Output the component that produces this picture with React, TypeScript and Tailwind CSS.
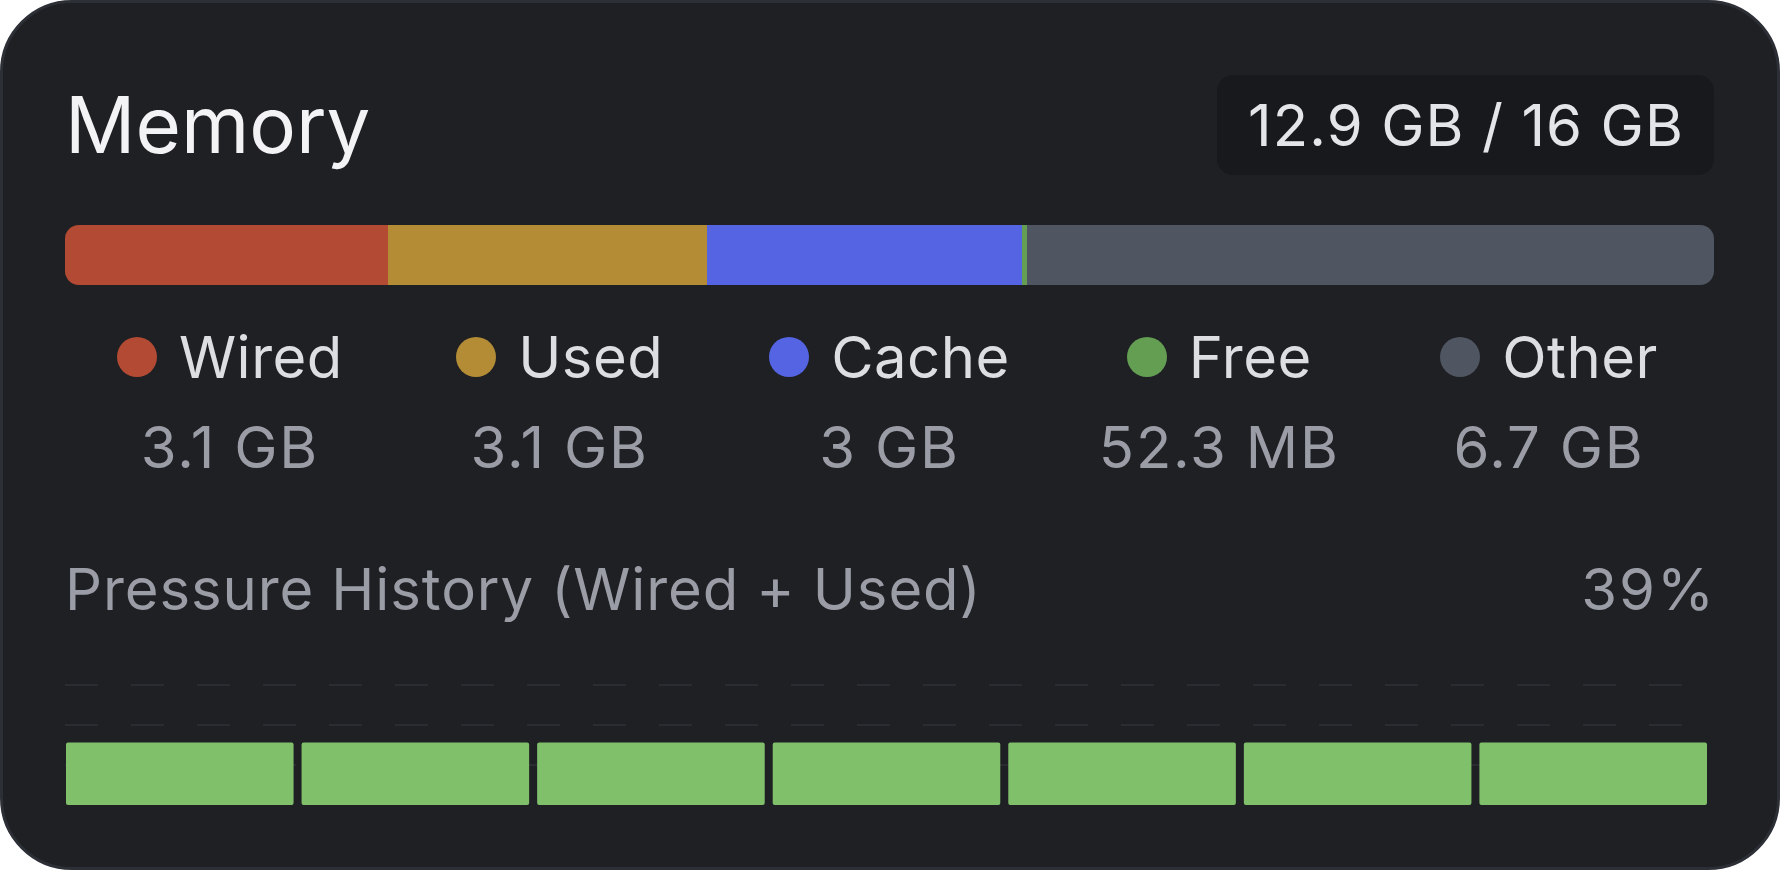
const segments = [
  { label: 'Wired', value: '3.1 GB', pct: 19.59, color: 'bg-[#b34a33]' },
  { label: 'Used', value: '3.1 GB', pct: 19.35, color: 'bg-[#b38c35]' },
  { label: 'Cache', value: '3 GB', pct: 19.1, color: 'bg-[#5464e3]' },
  { label: 'Free', value: '52.3 MB', pct: 0.3, color: 'bg-[#639e53]' },
  { label: 'Other', value: '6.7 GB', pct: 41.66, color: 'bg-[#4f5561]' },
]

// pressure history samples (percent)
const history = [39, 39, 39, 39, 39, 39, 39]

function PressureChart() {
  const width = 1649
  const height = 160
  const chartWidth = 1641
  const gap = 8
  const barWidth = (chartWidth - gap * (history.length - 1)) / history.length

  return (
    <svg width={width} height={height} className="block">
      {[0.25, 0.5, 0.75].map((f) => (
        <line
          key={f}
          x1={0}
          x2={width}
          y1={height * f}
          y2={height * f}
          stroke="#2a2c31"
          strokeWidth={2}
          strokeDasharray="33 33"
        />
      ))}
      {history.map((p, i) => {
        const h = (height * p) / 100
        return (
          <rect
            key={i}
            x={1 + i * (barWidth + gap)}
            y={height - h}
            width={barWidth}
            height={h}
            rx={2}
            fill="#80c06b"
          />
        )
      })}
    </svg>
  )
}

export default function App() {
  return (
    <div className="w-[1780px] h-[870px] bg-white" style={{ fontFamily: 'Inter, "Noto Sans", sans-serif' }}>
      <div className="h-full rounded-[72px] border-[3px] border-[#2c2f36] bg-[#1f2024] pl-[62px] pr-[63px] pt-[72px]">
        {/* Header */}
        <div className="flex h-[100px] items-center justify-between">
          <div className="text-[78px] leading-none text-[#f3f3f5]">Memory</div>
          <div className="flex h-[100px] items-center rounded-[16px] bg-[#18191c] pl-[31px] pr-[30px] text-[58px] leading-none tracking-[1.1px] text-[#e4e5e9]">
            12.9 GB / 16 GB
          </div>
        </div>

        {/* Usage bar */}
        <div className="mt-[50px] flex h-[60px] overflow-hidden rounded-[14px]">
          {segments.map((s) => (
            <div key={s.label} className={s.color} style={{ width: `${s.pct}%` }} />
          ))}
        </div>

        {/* Legend */}
        <div className="mt-[43px] grid grid-cols-5">
          {segments.map((s) => (
            <div key={s.label} className="flex flex-col items-center">
              <div className="flex h-[58px] items-center gap-[22px]">
                <span className={`h-[40px] w-[40px] rounded-full ${s.color}`} />
                <span className="text-[58px] leading-[58px] tracking-[0.5px] text-[#dddee2]">{s.label}</span>
              </div>
              <div className="mt-[32px] text-[58px] leading-[58px] tracking-[1.8px] text-[#9a9da6]">
                {s.value}
              </div>
            </div>
          ))}
        </div>

        {/* Pressure */}
        <div className="mt-[84px] flex h-[58px] items-center justify-between text-[58px] leading-[58px] text-[#9a9da6]">
          <span className="tracking-[0.9px]">Pressure History (Wired + Used)</span>
          <span className="mr-[-2px] tracking-[2px]">39%</span>
        </div>

        <div className="mt-[27px]">
          <PressureChart />
        </div>
      </div>
    </div>
  )
}
